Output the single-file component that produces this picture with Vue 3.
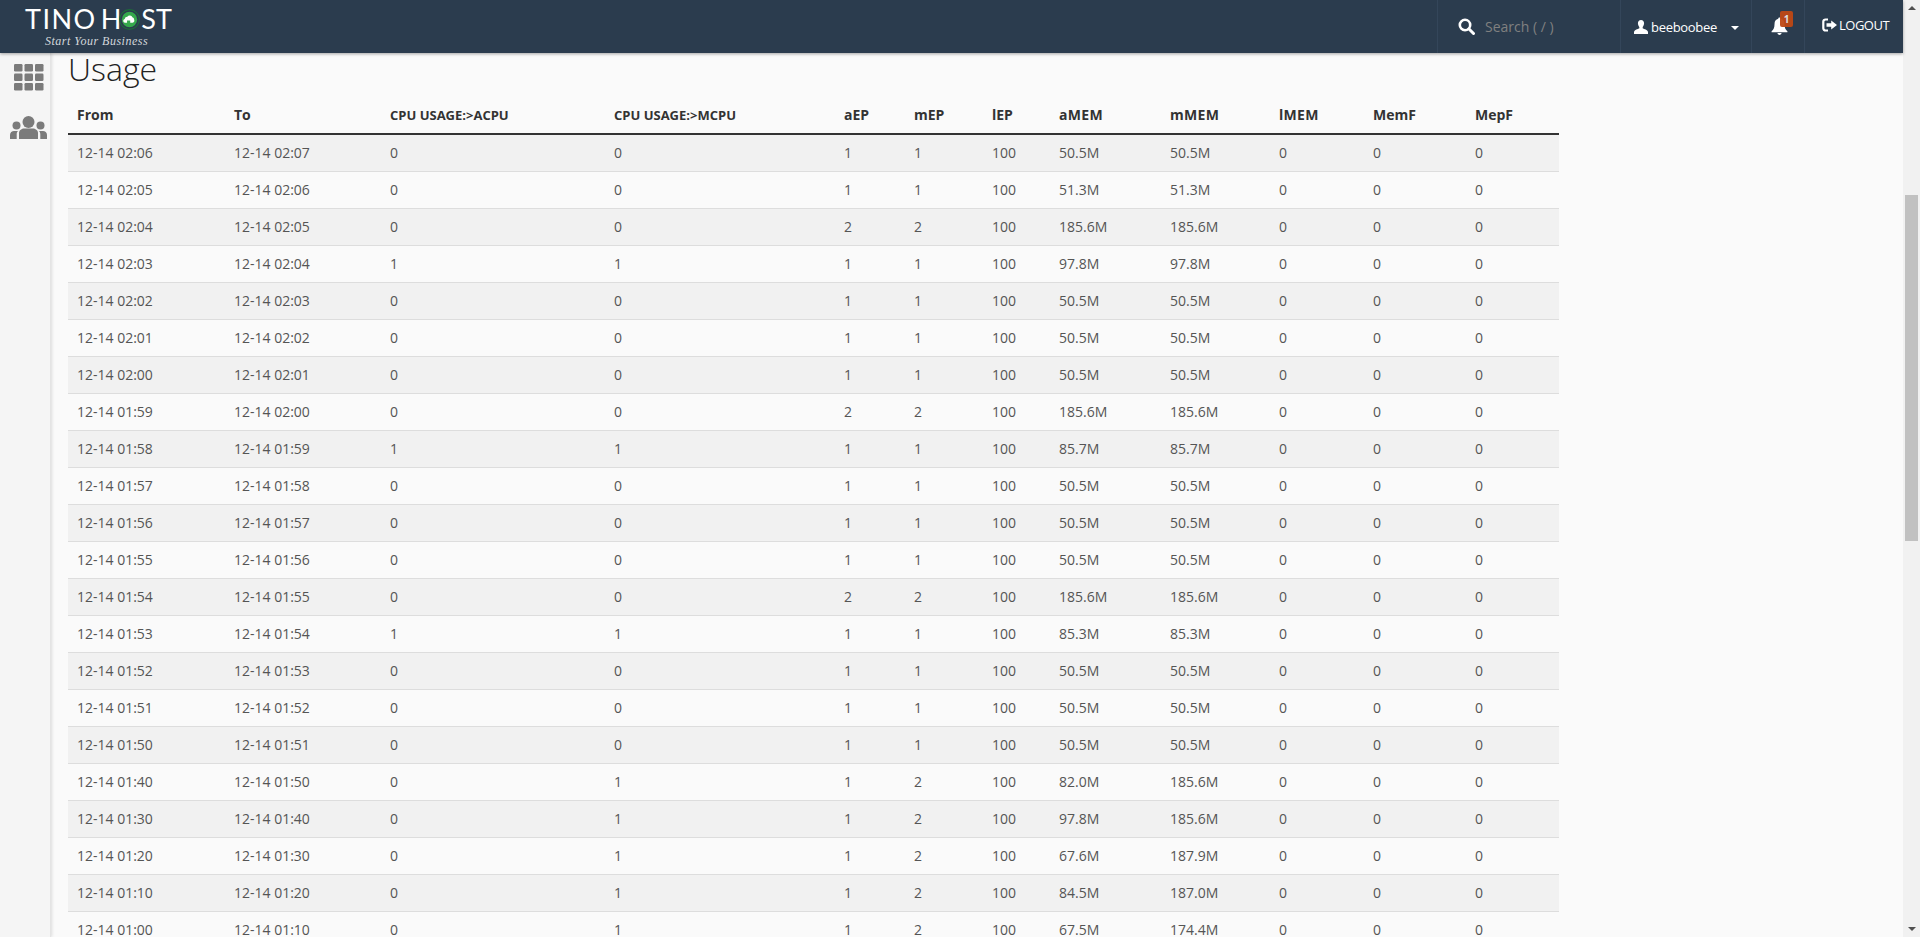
<script setup>
const base = [
  ['12-14 02:06', '12-14 02:07', 0, 0, 1, 1, '50.5M', '50.5M'],
  ['12-14 02:05', '12-14 02:06', 0, 0, 1, 1, '51.3M', '51.3M'],
  ['12-14 02:04', '12-14 02:05', 0, 0, 2, 2, '185.6M', '185.6M'],
  ['12-14 02:03', '12-14 02:04', 1, 1, 1, 1, '97.8M', '97.8M'],
  ['12-14 02:02', '12-14 02:03', 0, 0, 1, 1, '50.5M', '50.5M'],
  ['12-14 02:01', '12-14 02:02', 0, 0, 1, 1, '50.5M', '50.5M'],
  ['12-14 02:00', '12-14 02:01', 0, 0, 1, 1, '50.5M', '50.5M'],
  ['12-14 01:59', '12-14 02:00', 0, 0, 2, 2, '185.6M', '185.6M'],
  ['12-14 01:58', '12-14 01:59', 1, 1, 1, 1, '85.7M', '85.7M'],
  ['12-14 01:57', '12-14 01:58', 0, 0, 1, 1, '50.5M', '50.5M'],
  ['12-14 01:56', '12-14 01:57', 0, 0, 1, 1, '50.5M', '50.5M'],
  ['12-14 01:55', '12-14 01:56', 0, 0, 1, 1, '50.5M', '50.5M'],
  ['12-14 01:54', '12-14 01:55', 0, 0, 2, 2, '185.6M', '185.6M'],
  ['12-14 01:53', '12-14 01:54', 1, 1, 1, 1, '85.3M', '85.3M'],
  ['12-14 01:52', '12-14 01:53', 0, 0, 1, 1, '50.5M', '50.5M'],
  ['12-14 01:51', '12-14 01:52', 0, 0, 1, 1, '50.5M', '50.5M'],
  ['12-14 01:50', '12-14 01:51', 0, 0, 1, 1, '50.5M', '50.5M'],
  ['12-14 01:40', '12-14 01:50', 0, 1, 1, 2, '82.0M', '185.6M'],
  ['12-14 01:30', '12-14 01:40', 0, 1, 1, 2, '97.8M', '185.6M'],
  ['12-14 01:20', '12-14 01:30', 0, 1, 1, 2, '67.6M', '187.9M'],
  ['12-14 01:10', '12-14 01:20', 0, 1, 1, 2, '84.5M', '187.0M'],
  ['12-14 01:00', '12-14 01:10', 0, 1, 1, 2, '67.5M', '174.4M']
];

const columns = [
  { name: 'From', width: 157 },
  { name: 'To', width: 156 },
  { name: 'CPU USAGE:>ACPU', width: 224 },
  { name: 'CPU USAGE:>MCPU', width: 230 },
  { name: 'aEP', width: 70 },
  { name: 'mEP', width: 78 },
  { name: 'lEP', width: 67 },
  { name: 'aMEM', width: 111 },
  { name: 'mMEM', width: 109 },
  { name: 'lMEM', width: 94 },
  { name: 'MemF', width: 102 },
  { name: 'MepF', width: 93 }
];

// lEP is always 100 and the last three limits are always 0 in this view
const rows = base.map((r) => [r[0], r[1], r[2], r[3], r[4], r[5], 100, r[6], r[7], 0, 0, 0]);
</script>

<template>
  <div class="page">
    <div class="window">
      <header class="topbar">
        <div class="logo">
          <div class="logo-name">
            <span class="logo-tino">TINO</span><span class="logo-h">H</span>
            <svg class="logo-o" viewBox="0 0 24 24">
              <circle cx="12" cy="12" r="11.300" fill="#2b3c4e" stroke="#1d6b3a" stroke-width="1.200" />
              <circle cx="12" cy="12" r="8.800" fill="#35a94c" />
              <path d="M6.800 15.800a2.300 2.300 0 0 1-.3-4.500 3 3 0 0 1 3-2.400 3.200 3.200 0 0 1 5.800.6 2.700 2.700 0 0 1 2 2.600 2.800 2.800 0 0 1-1.800 3.700h-2.700v-2.800h-3.600v2.800z" fill="#fff" />
            </svg>
            <span class="logo-st">ST</span>
          </div>
          <div class="logo-tag">Start Your Business</div>
        </div>
        <nav class="topnav">
          <div class="nav-item nav-search">
            <svg class="ico-search" viewBox="0 0 17 17">
              <circle cx="7" cy="7" r="5.200" fill="none" stroke="#fff" stroke-width="2.600" />
              <path d="M10.800 10.800l4.700 4.700" stroke="#fff" stroke-width="3" stroke-linecap="round" />
            </svg>
            <span class="search-text">Search ( / )</span>
          </div>
          <div class="nav-item nav-user">
            <svg class="ico-user" viewBox="0 0 15 15">
              <path d="M7.500 0C5.400 0 4.200 1.500 4.200 3.600c0 1.600.7 3 1.500 3.900v1.300C4 9.700.6 10.500 0 12.600V15h15v-2.400c-.6-2.100-4-2.900-5.700-3.800V7.500c.8-.9 1.500-2.300 1.500-3.900C10.800 1.500 9.600 0 7.500 0z" fill="#fff" />
            </svg>
            <span class="user-name">beeboobee</span>
            <span class="caret"></span>
          </div>
          <div class="nav-item nav-bell">
            <svg class="ico-bell" viewBox="0 0 16 18">
              <path d="M8 1.500c-.7 0-1.200.5-1.200 1.100C4.500 3.200 3.300 5 3.300 7.500c0 3.500-1 5.300-2.800 7v.8h15v-.8c-1.800-1.700-2.800-3.500-2.800-7 0-2.500-1.200-4.300-3.500-4.900 0-.6-.5-1.100-1.200-1.100zM6 16.200a2 1.700 0 0 0 4 0z" fill="#fff" />
            </svg>
            <span class="badge">1</span>
          </div>
          <div class="nav-item nav-logout">
            <svg class="ico-logout" viewBox="0 0 15 14">
              <path d="M6 1.500H3.500A2.200 2.200 0 0 0 1.300 3.700v6.600a2.200 2.200 0 0 0 2.200 2.200H6" fill="none" stroke="#fff" stroke-width="2.200" />
              <path d="M4.500 5.300h4.700V2.500L15 7l-5.800 4.500V8.700H4.500z" fill="#fff" />
            </svg>
            <span class="logout-text">LOGOUT</span>
          </div>
        </nav>
      </header>

      <div class="body">
        <aside class="sidebar">
          <svg class="ico-grid" viewBox="0 0 30 27">
            <g fill="#7b7b7b">
              <rect x="0" y="0" width="8.500" height="7.500" rx="1.200" />
              <rect x="10.500" y="0" width="8.500" height="7.500" rx="1.200" />
              <rect x="21" y="0" width="8.500" height="7.500" rx="1.200" />
              <rect x="0" y="9.500" width="8.500" height="7.500" rx="1.200" />
              <rect x="10.500" y="9.500" width="8.500" height="7.500" rx="1.200" />
              <rect x="21" y="9.500" width="8.500" height="7.500" rx="1.200" />
              <rect x="0" y="19" width="8.500" height="7.500" rx="1.200" />
              <rect x="10.500" y="19" width="8.500" height="7.500" rx="1.200" />
              <rect x="21" y="19" width="8.500" height="7.500" rx="1.200" />
            </g>
          </svg>
          <svg class="ico-users" viewBox="0 0 37 23">
            <g fill="#7b7b7b">
              <circle cx="18.500" cy="6" r="6" />
              <circle cx="6.500" cy="9.500" r="4" />
              <circle cx="30.500" cy="9.500" r="4" />
              <path d="M9 23v-6c0-3 3-4.500 5-4.500h9c2 0 5 1.500 5 4.500v6z" />
              <path d="M0 23v-4c0-2.500 2-4 4-4h4c-1 1-1.300 2-1.300 3.500V23zM37 23v-4c0-2.500-2-4-4-4h-4c1 1 1.300 2 1.300 3.500V23z" />
            </g>
          </svg>
        </aside>

        <main class="content">
          <h2 class="title">Usage</h2>
          <table class="usage">
            <colgroup>
              <col v-for="c in columns" :key="c.name" :style="{ width: c.width + 'px' }" />
            </colgroup>
            <thead>
              <tr>
                <th v-for="c in columns" :key="c.name">{{ c.name }}</th>
              </tr>
            </thead>
            <tbody>
              <tr v-for="r in rows" :key="r[0]">
                <td v-for="(v, i) in r" :key="i">{{ v }}</td>
              </tr>
            </tbody>
          </table>
        </main>
      </div>
    </div>

    <div class="scrollbar">
      <span class="arrow arrow-up"></span>
      <div class="track"><div class="thumb"></div></div>
      <span class="arrow arrow-down"></span>
    </div>
  </div>
</template>

<style>
html, body {
  margin: 0;
  overflow: hidden;
}
</style>

<style scoped>
.page {
  display: flex;
  height: 937px;
  overflow: hidden;
  font-family: "Open Sans", "Liberation Sans", sans-serif;
  font-size: 14px;
  color: #555;
  background: #fafafa;
}

.window {
  flex: 1;
  min-width: 0;
  display: flex;
  flex-direction: column;
}

.topbar {
  position: relative;
  z-index: 2;
  flex: none;
  height: 53px;
  display: flex;
  justify-content: space-between;
  background: #2b3c4e;
  box-shadow: 0 1px 3px rgba(0, 0, 0, 0.35);
}

.logo {
  padding: 6px 0 0 25px;
  color: #fff;
}

.logo-name {
  display: flex;
  align-items: center;
  height: 26px;
  font-family: Lato, "Open Sans", sans-serif;
  font-size: 27px;
  font-weight: 400;
  line-height: 26px;
}

.logo-tino {
  letter-spacing: 1.500px;
}

.logo-h {
  margin-left: 4px;
}

.logo-o {
  width: 21px;
  height: 21px;
  margin: 0 0 0 -2px;
}

.logo-st {
  margin-left: 1px;
}

.logo-tag {
  margin: 2px 0 0 20px;
  font-family: "Liberation Serif", serif;
  font-style: italic;
  font-size: 12px;
  line-height: 14px;
  letter-spacing: 0.5px;
  color: #d4d8dc;
}

.topnav {
  display: flex;
}

.nav-item {
  display: flex;
  align-items: center;
  box-sizing: border-box;
  border-left: 1px solid #34465a;
  color: #fff;
}

.nav-search {
  width: 183px;
  padding-left: 20px;
}

.ico-search {
  width: 17px;
  height: 17px;
}

.search-text {
  margin-left: 10px;
  color: #808080;
}

.nav-user {
  width: 131px;
  padding-left: 13px;
}

.ico-user {
  width: 14px;
  height: 14px;
}

.user-name {
  margin-left: 3px;
  font-size: 13px;
  letter-spacing: -0.3px;
}

.caret {
  margin-left: 14px;
  margin-top: 3px;
  border-top: 4px solid #fff;
  border-left: 4px solid transparent;
  border-right: 4px solid transparent;
}

.nav-bell {
  position: relative;
  width: 53px;
  padding-left: 19px;
}

.ico-bell {
  width: 17px;
  height: 19px;
  margin-top: -3px;
}

.badge {
  position: absolute;
  left: 28px;
  top: 11px;
  width: 13px;
  height: 16px;
  border-radius: 2px;
  background: rgba(190, 72, 20, 0.95);
  color: #ddd;
  font-size: 10px;
  font-weight: 700;
  line-height: 16px;
  text-align: center;
}

.nav-logout {
  width: 99px;
  padding: 0 0 3px 17px;
}

.ico-logout {
  width: 15px;
  height: 14px;
}

.logout-text {
  margin-left: 2px;
  font-size: 13px;
  letter-spacing: -0.5px;
}

.body {
  flex: 1;
  min-height: 0;
  display: flex;
}

.sidebar {
  flex: none;
  width: 51px;
  box-sizing: border-box;
  display: flex;
  flex-direction: column;
  align-items: center;
  padding: 11px 0 0 7px;
  background: #f5f5f5;
  border-right: 1px solid #e4e4e4;
  box-shadow: 1px 0 3px rgba(0, 0, 0, 0.12);
}

.ico-grid {
  flex: none;
  width: 30px;
  height: 27px;
}

.ico-users {
  flex: none;
  width: 37px;
  height: 23px;
  margin-top: 25px;
}

.content {
  flex: 1;
  min-width: 0;
  padding-left: 17px;
}

.title {
  margin: 0;
  height: 38px;
  font-size: 32px;
  font-weight: 300;
  line-height: 32px;
  color: #222;
}

.usage {
  width: 1491px;
  table-layout: fixed;
  border-collapse: collapse;
}

.usage th {
  height: 43px;
  padding: 0 9px 8px;
  box-sizing: border-box;
  vertical-align: bottom;
  border-bottom: 2px solid #333;
  text-align: left;
  font-size: 14px;
  line-height: 20px;
  font-weight: 700;
  color: #333;
}

.usage th:nth-child(3),
.usage th:nth-child(4) {
  font-size: 13px;
}

.usage th:nth-child(8),
.usage th:nth-child(9),
.usage th:nth-child(10) {
  letter-spacing: 0.3px;
}

.usage td {
  height: 37px;
  padding: 0 9px;
  box-sizing: border-box;
  border-bottom: 1px solid #ddd;
  color: #555;
}

.usage tbody tr:nth-child(odd) {
  background: #f1f1f1;
}

.scrollbar {
  flex: none;
  width: 17px;
  display: flex;
  flex-direction: column;
  align-items: center;
  background: #f1f1f1;
}

.arrow {
  flex: none;
  width: 0;
  height: 0;
  margin: 6px 0;
  border-left: 4px solid transparent;
  border-right: 4px solid transparent;
}

.arrow-up {
  border-bottom: 4px solid #505050;
}

.arrow-down {
  border-top: 4px solid #505050;
}

.track {
  flex: 1;
  width: 100%;
  padding-top: 179px;
  box-sizing: border-box;
}

.thumb {
  width: 13px;
  margin-left: 2px;
  height: 346px;
  background: #c1c1c1;
}
</style>
